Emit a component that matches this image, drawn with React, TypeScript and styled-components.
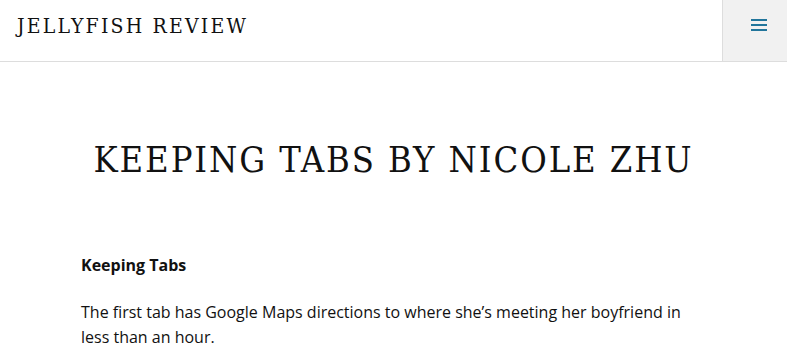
import React from 'react';
import styled, { createGlobalStyle } from 'styled-components';

const GlobalStyle = createGlobalStyle`
  body {
    margin: 0;
    background: #fff;
    color: #111;
    font-family: "Open Sans", "Liberation Sans", sans-serif;
  }
`;

const Header = styled.header`
  display: flex;
  align-items: stretch;
  height: 61px;
  border-bottom: 1px solid #ddd;
`;

const SiteTitle = styled.div`
  flex: 1;
  display: flex;
  align-items: center;
  padding: 0 17px 9px;
  font-family: "DejaVu Serif", serif;
  font-stretch: condensed;
  font-size: 21px;
  letter-spacing: 2.2px;
  color: #111;
  text-transform: uppercase;
`;

const MenuButton = styled.button`
  width: 65px;
  border: none;
  border-left: 1px solid #ddd;
  background: #f1f1f1;
  display: flex;
  align-items: center;
  justify-content: center;
  cursor: pointer;
  padding: 0 0 12px 8px;
`;

const Main = styled.main`
  padding: 76px 0 0;
`;

const PageTitle = styled.h1`
  margin: 0 0 71px;
  text-align: center;
  font-family: "DejaVu Serif", serif;
  font-stretch: condensed;
  font-weight: 400;
  font-size: 36px;
  line-height: 44px;
  letter-spacing: 1.9px;
  text-transform: uppercase;
  color: #111;
`;

const Content = styled.div`
  margin: 0 81px;
  max-width: 620px;
  font-size: 16px;
  line-height: 25.6px;
`;

const Para = styled.p<{ $bold?: boolean }>`
  margin: 0 0 21px;
  font-weight: ${(p) => (p.$bold ? 700 : 400)};
`;

const MenuIcon = () => (
  <svg width="16" height="12" viewBox="0 0 16 12">
    <rect x="0" y="0" width="16" height="2" fill="#21759b" />
    <rect x="0" y="5" width="16" height="2" fill="#21759b" />
    <rect x="0" y="10" width="16" height="2" fill="#21759b" />
  </svg>
);

export default function App() {
  return (
    <>
      <GlobalStyle />
      <Header>
        <SiteTitle>Jellyfish Review</SiteTitle>
        <MenuButton aria-label="Menu">
          <MenuIcon />
        </MenuButton>
      </Header>
      <Main>
        <PageTitle>Keeping Tabs by Nicole Zhu</PageTitle>
        <Content>
          <Para $bold>Keeping Tabs</Para>
          <Para>
            The first tab has Google Maps directions to where she’s meeting her boyfriend in less than an hour.
          </Para>
        </Content>
      </Main>
    </>
  );
}
